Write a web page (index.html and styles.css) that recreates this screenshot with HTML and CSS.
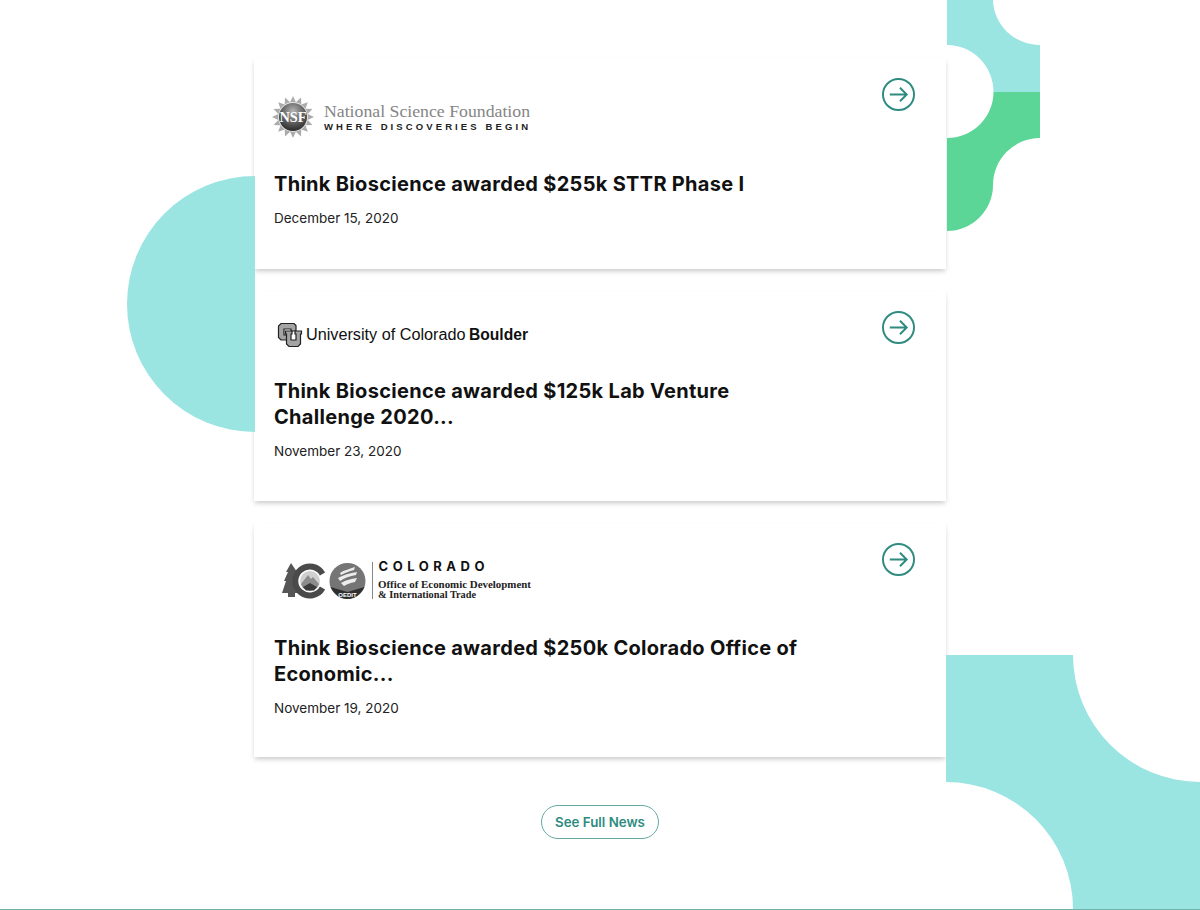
FILE: index.html
```html
<!DOCTYPE html>
<html lang="en">
<head>
<meta charset="utf-8">
<title>News</title>
<link rel="stylesheet" href="styles.css">
</head>
<body>
<main class="news">
  <article class="card">
    <div class="card-body">
      <svg class="logo logo-nsf" viewBox="0 0 270 72" aria-label="National Science Foundation">
        <defs>
          <radialGradient id="globe" cx="0.5" cy="0.3" r="0.75">
            <stop offset="0" stop-color="#b5b5b5"/>
            <stop offset="0.55" stop-color="#5e5e5e"/>
            <stop offset="1" stop-color="#222"/>
          </radialGradient>
        </defs>
        <polygon class="nsf-rays" transform="translate(23 39)" points="21,0 14.7,2.9 19.4,8 12.5,8.3 14.8,14.8 8.3,12.5 8,19.4 2.9,14.7 0,21 -2.9,14.7 -8,19.4 -8.3,12.5 -14.8,14.8 -12.5,8.3 -19.4,8 -14.7,2.9 -21,0 -14.7,-2.9 -19.4,-8 -12.5,-8.3 -14.8,-14.8 -8.3,-12.5 -8,-19.4 -2.9,-14.7 0,-21 2.9,-14.7 8,-19.4 8.3,-12.5 14.8,-14.8 12.5,-8.3 19.4,-8 14.7,-2.9"/>
        <circle cx="23" cy="39" r="15" fill="#e4e4e4"/>
        <circle cx="23" cy="39" r="14" fill="url(#globe)"/>
        <text class="nsf-mark" x="23" y="44" textLength="27" lengthAdjust="spacingAndGlyphs">NSF</text>
        <text class="nsf-name" x="54" y="39" textLength="206" lengthAdjust="spacingAndGlyphs">National Science Foundation</text>
        <text class="nsf-tag" x="54" y="51.500" textLength="204" lengthAdjust="spacing">WHERE DISCOVERIES BEGIN</text>
      </svg>
      <h2 class="title">Think Bioscience awarded $255k STTR Phase I</h2>
      <p class="date">December 15, 2020</p>
    </div>
    <svg class="go" viewBox="0 0 34 34"><circle cx="17" cy="17" r="16"/><path d="M8 17H25.500M18.500 10l7 7-7 7"/></svg>
  </article>

  <article class="card">
    <div class="card-body">
      <svg class="logo logo-cu" viewBox="0 0 270 46" aria-label="University of Colorado Boulder">
        <path class="cu-shape" d="M11 12.500H24L26 14.500V20H21V18H14V24H17V29H11L8.500 26.500V15z"/>
        <path class="cu-shape" d="M15.500 20H22V23H21V29H26V23H25V20H31.500V23H30.500V33L28 35.500H19L16.500 33V23H15.500z"/>
        <text class="cu-name" x="36" y="29" textLength="159.500" lengthAdjust="spacingAndGlyphs">University of Colorado</text>
        <text class="cu-bold" x="199" y="29" textLength="59" lengthAdjust="spacingAndGlyphs">Boulder</text>
      </svg>
      <h2 class="title">Think Bioscience awarded $125k Lab Venture Challenge 2020...</h2>
      <p class="date">November 23, 2020</p>
    </div>
    <svg class="go" viewBox="0 0 34 34"><circle cx="17" cy="17" r="16"/><path d="M8 17H25.500M18.500 10l7 7-7 7"/></svg>
  </article>

  <article class="card">
    <div class="card-body">
      <svg class="logo logo-co" viewBox="0 0 270 71" aria-label="Colorado Office of Economic Development and International Trade">
        <path fill="#555" d="M21 20L27 29H25L30 38H28L33 50H25V54H18V50H12L16 38H14L18 29H16z"/>
        <circle cx="40" cy="38" r="16" fill="#fff"/>
        <path fill="none" stroke="#4a4a4a" stroke-width="6" d="M52.500 31A14.500 14.500 0 1 0 52.500 45"/>
        <circle cx="40" cy="38" r="10" fill="#cfcfcf"/>
        <path fill="#8c8c8c" d="M31 41L38 32L41 36L43 34L49 41L47 45L40 48L33 45z"/>
        <path fill="#3c3c3c" d="M33 44L40 40L47 44L44 47.500H36z"/>
        <circle cx="77.500" cy="38" r="18" fill="#757575"/>
        <path fill="#ededed" d="M70 30C74 27 80 26 85 24L84 27C79 28 75 30 71 32zM68 35C73 32 80 30 87 29L86 32C80 33 74 35 70 38zM71 40C76 37 81 36 87 35L85 39C80 40 77 41 74 43z"/>
        <path fill="#2e2e2e" d="M60.500 44L77.500 49L94.500 44C91 51 85 56 77.500 56S64 51 60.500 44z"/>
        <text class="oedit" x="77.500" y="54">OEDIT</text>
        <rect x="102" y="19" width="1" height="37" fill="#888"/>
        <text class="co-name" x="108.500" y="28" textLength="106" lengthAdjust="spacing">COLORADO</text>
        <text class="co-line" x="108" y="44.500" textLength="153" lengthAdjust="spacingAndGlyphs">Office of Economic Development</text>
        <text class="co-line" x="108" y="55" textLength="98" lengthAdjust="spacingAndGlyphs">&amp; International Trade</text>
      </svg>
      <h2 class="title">Think Bioscience awarded $250k Colorado Office of Economic...</h2>
      <p class="date">November 19, 2020</p>
    </div>
    <svg class="go" viewBox="0 0 34 34"><circle cx="17" cy="17" r="16"/><path d="M8 17H25.500M18.500 10l7 7-7 7"/></svg>
  </article>

  <div class="more"><a class="more-btn" href="#">See Full News</a></div>
</main>

<svg class="deco deco-left" viewBox="0 0 128 256"><path class="teal" d="M128 0A128 128 0 0 0 128 256z"/></svg>
<svg class="deco deco-top" viewBox="0 0 93 231">
  <path class="teal" d="M0 0H46A47 46 0 0 0 93 45V92H46.500A46.500 47 0 0 0 0 45z"/>
  <path class="green" d="M46.500 92H93V138A47 47 0 0 0 46 185A46 46 0 0 1 0 231V138A46.500 46 0 0 0 46.500 92z"/>
</svg>
<svg class="deco deco-bottom" viewBox="0 0 254 254"><path class="teal" d="M0 0H127A127 127 0 0 0 254 127V254H127A127 127 0 0 0 0 127z"/></svg>
</body>
</html>
```
FILE: styles.css
```css
* { box-sizing: border-box; }
html, body { margin: 0; padding: 0; }
body {
  position: relative;
  height: 910px;
  overflow: hidden;
  background: #fff;
  border-bottom: 1px solid #6fb3a8;
  font-family: "Inter", "Liberation Sans", sans-serif;
}
.news {
  width: 692px;
  margin: 0 auto;
  padding-top: 58px;
  display: flex;
  flex-direction: column;
}
.card {
  display: flex;
  justify-content: space-between;
  align-items: flex-start;
  background: #fff;
  padding: 20px 31px 0 20px;
  box-shadow: 0 3px 5px -1px rgba(0, 0, 0, 0.22);
  margin-bottom: 22.500px;
}
.card:nth-child(2) { margin-bottom: 22px; }
.card:nth-child(3) { margin-bottom: 47.500px; }
.card-body { width: 540px; }
.logo { display: block; width: 270px; margin: 0 0 20.500px -4px; }
.logo-nsf { height: 72px; }
.logo-cu { height: 46px; }
.logo-co { height: 71px; }
.title {
  margin: 0 0 11.500px;
  font-size: 20px;
  line-height: 26.500px;
  font-weight: 700;
  color: #111;
  letter-spacing: 0.3px;
}
.date {
  margin: 0 0 42px;
  font-size: 13.500px;
  line-height: 18px;
  color: #222;
}
.card:nth-child(2) .date { margin-bottom: 41px; }
.card:nth-child(3) .date { margin-bottom: 40px; }
.go {
  width: 33px;
  height: 33px;
  flex: none;
  fill: none;
  stroke: #2e8b80;
  stroke-width: 2;
  overflow: visible;
}
.more { display: flex; justify-content: center; }
.more-btn {
  display: block;
  width: 118px;
  height: 34px;
  border: 1px solid #62aaa1;
  border-radius: 17px;
  font-size: 13.300px;
  font-weight: 600;
  line-height: 32px;
  text-align: center;
  text-decoration: none;
  color: #2e8b80;
}
.deco { position: absolute; display: block; }
.deco-left { left: 127px; top: 176px; width: 128px; height: 256px; }
.deco-top { left: 947px; top: 0; width: 93px; height: 231px; }
.deco-bottom { left: 946px; top: 655px; width: 254px; height: 254px; }
.teal { fill: #9ae4e1; }
.green { fill: #5bd696; }
.nsf-rays { fill: #ababab; }
.nsf-mark { font: 700 14px "Liberation Serif", serif; fill: #fff; text-anchor: middle; }
.nsf-name { font: 400 17px "Liberation Serif", serif; fill: #858585; }
.nsf-tag { font: 700 9.500px "Liberation Sans", sans-serif; fill: #222; }
.cu-shape { fill: #a4a4a4; stroke: #222; stroke-width: 1.200; }
.cu-name { font: 400 16px "Liberation Sans", sans-serif; fill: #111; }
.cu-bold { font: 700 16px "Liberation Sans", sans-serif; fill: #111; }
.oedit { font: 700 6px "Liberation Sans", sans-serif; fill: #fff; text-anchor: middle; }
.co-name { font: 700 13px "Inter", sans-serif; fill: #111; }
.co-line { font: 700 10px "Liberation Serif", serif; fill: #222; }
```
